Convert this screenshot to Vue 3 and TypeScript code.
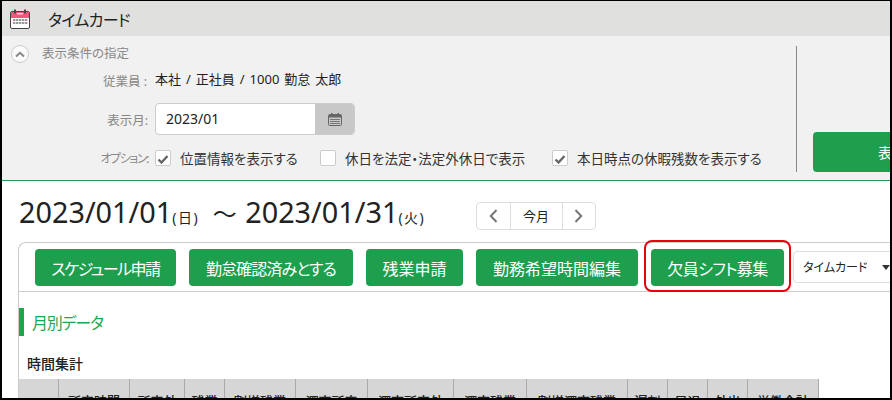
<script setup lang="ts">
const options = [
  { label: '位置情報を表示する', checked: true, width: 165 },
  { label: '休日を法定・法定外休日で表示', checked: false, width: 232 },
  { label: '本日時点の休暇残数を表示する', checked: true, width: 210 },
]

// tight: カナの多いボタンは字詰めを変えて見本の幅に合わせる
const actions = [
  { label: 'スケジュール申請', width: 141, tight: -1.5 },
  { label: '勤怠確認済みとする', width: 164, tight: -0.9 },
  { label: '残業申請', width: 97, tight: 0 },
  { label: '勤務希望時間編集', width: 162, tight: 0 },
]

// ヘッダーの列幅は見本の罫線位置から取った値
const columns = [
  { label: '', width: 40 },
  { label: '所定時間', width: 71 },
  { label: '所定外', width: 55 },
  { label: '残業', width: 40 },
  { label: '割増残業', width: 71 },
  { label: '深夜所定', width: 72 },
  { label: '深夜所定外', width: 86 },
  { label: '深夜残業', width: 73 },
  { label: '割増深夜残業', width: 101 },
  { label: '遅刻', width: 40 },
  { label: '早退', width: 40 },
  { label: '外出', width: 40 },
  { label: '労働合計', width: 71 },
]
</script>

<template>
  <div class="frame">
    <header class="title-bar">
      <svg class="cal-logo" width="20" height="20" viewBox="0 0 20 20">
        <rect x="0.5" y="2.5" width="19" height="17" rx="1.5" fill="#fff" stroke="#444" />
        <path d="M1 4a1 1 0 0 1 1-1h16a1 1 0 0 1 1 1v5H1z" fill="#f4557a" />
        <rect x="4" y="0.5" width="2" height="4" fill="#444" />
        <rect x="14" y="0.5" width="2" height="4" fill="#444" />
        <rect x="7" y="4" width="6" height="1.5" fill="#ffd5de" />
        <g fill="#f4557a">
          <rect x="6" y="7" width="2.4" height="2" />
          <rect x="9" y="7" width="2.4" height="2" />
          <rect x="12" y="7" width="2.4" height="2" />
          <rect x="15" y="7" width="2.4" height="2" />
        </g>
        <g fill="#9a9a9a">
          <rect x="3" y="10" width="2.4" height="2" />
          <rect x="6" y="10" width="2.4" height="2" />
          <rect x="9" y="10" width="2.4" height="2" />
          <rect x="12" y="10" width="2.4" height="2" />
          <rect x="15" y="10" width="2.4" height="2" />
          <rect x="3" y="13" width="2.4" height="2" />
          <rect x="6" y="13" width="2.4" height="2" />
          <rect x="9" y="13" width="2.4" height="2" />
          <rect x="12" y="13" width="2.4" height="2" />
          <rect x="15" y="13" width="2.4" height="2" />
        </g>
      </svg>
      <h1>タイムカード</h1>
    </header>

    <section class="cond-panel">
      <div class="cond-main">
        <div class="cond-head">
          <span class="toggle">
            <svg width="10" height="7" viewBox="0 0 10 7">
              <path d="M1 5.5L5 1.8L9 5.5" fill="none" stroke="#888" stroke-width="2" />
            </svg>
          </span>
          <span class="cond-head-text">表示条件の指定</span>
        </div>
        <div class="cond-row employee">
          <span class="cond-label">従業員 :</span>
          <span class="employee-value">本社 / 正社員 / 1000 勤怠 太郎</span>
        </div>
        <div class="cond-row month">
          <span class="cond-label">表示月:</span>
          <div class="month-input">
            <span class="month-value">2023/01</span>
            <span class="month-addon">
              <svg width="14" height="13" viewBox="0 0 14 13">
                <rect x="0.5" y="1.5" width="13" height="11" rx="1" fill="none" stroke="#666" />
                <rect x="1" y="2" width="12" height="2.5" fill="#666" />
                <rect x="3" y="0" width="1.5" height="2.5" fill="#666" />
                <rect x="9.5" y="0" width="1.5" height="2.5" fill="#666" />
                <path d="M2 6.5h10M2 8.5h10M2 10.5h10" stroke="#777" stroke-width="1" />
              </svg>
            </span>
          </div>
        </div>
        <div class="cond-row opts">
          <span class="cond-label narrow">オプション:</span>
          <label v-for="opt in options" :key="opt.label" class="opt" :style="{ width: opt.width + 'px' }">
            <span class="box">
              <svg v-if="opt.checked" width="12" height="11" viewBox="0 0 12 11">
                <path d="M1.5 6.5L4.5 9.5L10.5 3" fill="none" stroke="#666" stroke-width="2.4" />
              </svg>
            </span>
            <span>{{ opt.label }}</span>
          </label>
        </div>
      </div>
      <div class="cond-side">
        <button class="show-btn">表示</button>
      </div>
    </section>

    <main class="body">
      <div class="period-row">
        <div class="period">
          2023/01/01<small>(日)</small><span class="tilde">～</span>2023/01/31<small>(火)</small>
        </div>
        <div class="pager">
          <span class="pager-arrow">
            <svg width="9" height="14" viewBox="0 0 9 14"><path d="M7.5 1L1.8 7L7.5 13" fill="none" stroke="#777" stroke-width="2" /></svg>
          </span>
          <span class="pager-now">今月</span>
          <span class="pager-arrow">
            <svg width="9" height="14" viewBox="0 0 9 14"><path d="M1.5 1L7.2 7L1.5 13" fill="none" stroke="#777" stroke-width="2" /></svg>
          </span>
        </div>
      </div>

      <div class="card">
        <div class="toolbar">
          <button
            v-for="a in actions"
            :key="a.label"
            class="act-btn"
            :style="{ width: a.width + 'px', letterSpacing: a.tight + 'px' }"
          >{{ a.label }}</button>
          <div class="highlight-wrap">
            <button class="act-btn recruit">欠員シフト募集</button>
            <span class="highlight"></span>
          </div>
          <div class="view-select">
            <span class="view-name">タイムカード</span>
            <i class="caret"></i>
          </div>
        </div>

        <h2 class="section-title">月別データ</h2>
        <h3 class="sub-title">時間集計</h3>

        <div class="sum-head">
          <div v-for="(c, i) in columns" :key="i" class="sum-cell" :style="{ width: c.width + 'px' }">{{ c.label }}</div>
        </div>
      </div>
    </main>
  </div>
</template>

<style>
html,
body {
  margin: 0;
  overflow: hidden;
  background: #fff;
}
</style>

<style scoped>
.frame {
  box-sizing: border-box;
  width: 892px;
  height: 400px;
  overflow: hidden;
  border: 2px solid #000;
  border-top-width: 1px;
  font-family: "Noto Sans", "Noto Sans CJK JP", sans-serif;
  font-feature-settings: "palt";
  color: #222;
  background: #fff;
}

.title-bar {
  height: 35px;
  display: flex;
  align-items: center;
  padding-left: 8px;
  background: #e0e0de;
}

.cal-logo {
  flex: none;
}

.title-bar h1 {
  margin: 0 0 0 18px;
  font-size: 16px;
  letter-spacing: -0.7px;
  font-weight: 400;
  color: #222;
}

.cond-panel {
  height: 144px;
  display: flex;
  background: #f1f1f1;
  border-bottom: 1px solid #1e9f4d;
}

.cond-main {
  width: 795px;
  flex: none;
  border-right: 1px solid #888;
  margin-top: 10px;
  margin-bottom: 8px;
  box-sizing: border-box;
}

.cond-head {
  display: flex;
  align-items: center;
  gap: 13px;
  margin-top: -1px;
  padding-left: 9px;
  font-size: 12.5px;
  color: #888;
  height: 18px;
}

.cond-head-text {
  line-height: 14px;
  margin-top: -1px;
}

.toggle {
  box-sizing: border-box;
  width: 18px;
  height: 18px;
  border-radius: 50%;
  border: 1px solid #ccc;
  background: #fafafa;
  display: flex;
  align-items: center;
  justify-content: center;
}

.cond-row {
  display: flex;
  align-items: center;
  font-size: 12px;
}

.cond-label {
  width: 146px;
  flex: none;
  padding-right: 1px;
  box-sizing: border-box;
  text-align: right;
  color: #888;
  font-size: 12.5px;
}

.cond-label.narrow {
  font-size: 12px;
  letter-spacing: -1.4px;
}

.employee {
  margin-top: 8px;
  height: 18px;
}

.employee-value {
  margin-left: 7px;
  font-size: 13px;
  word-spacing: 1.6px;
  line-height: 16px;
  margin-top: -2px;
}

.month {
  margin-top: 14px;
}

.month-input {
  width: 200px;
  height: 32px;
  box-sizing: border-box;
  display: flex;
  border: 1px solid #ccc;
  border-radius: 4px;
  overflow: hidden;
  background: #fff;
  margin-left: 7px;
}

.month-value {
  flex: 1;
  padding-left: 10px;
  line-height: 30px;
  font-size: 14px;
  color: #222;
}

.month-addon {
  width: 39px;
  background: #c8c8c8;
  display: flex;
  align-items: center;
  justify-content: center;
}

.cond-row.month .cond-label {
  width: 146px;
  padding-right: 0;
}

.opts {
  margin-top: 13px;
}

.opts .cond-label {
  padding-right: 0;
}

.opt {
  display: flex;
  align-items: center;
  gap: 9px;
  font-size: 13.5px;
  color: #333;
  white-space: nowrap;
}

.opts .opt:first-of-type {
  margin-left: 7px;
}

.box {
  box-sizing: border-box;
  width: 16px;
  height: 16px;
  flex: none;
  border: 1px solid #ccc;
  border-radius: 2px;
  background: #fff;
  display: flex;
  align-items: center;
  justify-content: center;
}

.cond-side {
  flex: 1;
  min-width: 0;
  overflow: hidden;
  display: flex;
  align-items: flex-end;
  padding: 0 0 8px 16px;
}

.show-btn {
  flex: none;
  width: 158px;
  height: 40px;
  border: none;
  border-radius: 4px;
  background: #1e9f4d;
  color: #fff;
  font-family: inherit;
  font-feature-settings: inherit;
  font-size: 14px;
}

.period-row {
  height: 61px;
  display: flex;
  padding-left: 17px;
}

.period {
  width: 457px;
  flex: none;
  font-size: 28.8px;
  line-height: 40px;
  margin-top: 11px;
  color: #222;
  white-space: nowrap;
}

.period small {
  display: inline-block;
  width: 32px;
  box-sizing: border-box;
  font-size: 14px;
  letter-spacing: 1.5px;
}

.tilde {
  display: inline-block;
  width: 41px;
  text-align: center;
  font-size: 24px;
  font-feature-settings: normal;
}

.pager {
  display: flex;
  width: 120px;
  height: 28px;
  box-sizing: border-box;
  margin-top: 21px;
  border: 1px solid #ddd;
  border-radius: 4px;
}

.pager-arrow {
  flex: 1;
  display: flex;
  align-items: center;
  justify-content: center;
}

.pager-now {
  box-sizing: border-box;
  width: 53px;
  flex: none;
  text-align: center;
  font-size: 13px;
  line-height: 26px;
  border-left: 1px solid #ddd;
  border-right: 1px solid #ddd;
}

.card {
  margin-left: 16px;
  width: 900px;
  height: 170px;
  box-sizing: border-box;
  border-top: 1px solid #ccc;
  border-left: 1px solid #ccc;
  border-top-left-radius: 8px;
}

.toolbar {
  height: 49px;
  box-sizing: border-box;
  display: flex;
  align-items: flex-start;
  gap: 13px;
  padding: 6px 0 0 16px;
  border-bottom: 1px solid #ccc;
}

.act-btn {
  height: 37px;
  flex: none;
  padding: 0;
  border: none;
  border-radius: 4px;
  background: #1e9f4d;
  color: #fff;
  font-family: inherit;
  font-feature-settings: inherit;
  font-size: 16px;
  white-space: nowrap;
}

.highlight-wrap {
  position: relative;
  flex: none;
  height: 37px;
}

.recruit {
  width: 133px;
  letter-spacing: -0.6px;
}

.highlight {
  position: absolute;
  inset: -9px -7px -6px;
  border: 2px solid #e8000d;
  border-radius: 8px;
  pointer-events: none;
}

.view-select {
  flex: none;
  width: 120px;
  height: 32px;
  margin: 2px 0 0 -4px;
  box-sizing: border-box;
  display: flex;
  align-items: center;
  padding-left: 9px;
  border: 1px solid #ddd;
  border-radius: 4px;
  background: #fff;
  font-size: 12px;
  color: #222;
}

.view-name {
  width: 63px;
  flex: none;
  white-space: nowrap;
}

.caret {
  flex: none;
  width: 0;
  height: 0;
  margin-left: 16px;
  border-left: 4px solid transparent;
  border-right: 4px solid transparent;
  border-top: 5px solid #333;
}

.section-title {
  margin: 16px 0 0;
  height: 28px;
  box-sizing: border-box;
  padding-left: 8px;
  border-left: 5px solid #1ea64f;
  font-size: 16px;
  letter-spacing: -1.2px;
  font-weight: 400;
  line-height: 30px;
  color: #1ea64f;
}

.sub-title {
  margin: 18px 0 0 8px;
  height: 20px;
  font-size: 14px;
  font-weight: 500;
  line-height: 20px;
  color: #222;
}

.sum-head {
  margin-top: 5px;
  height: 40px;
  display: flex;
}

.sum-cell {
  flex: none;
  box-sizing: border-box;
  padding-top: 12px;
  background: #d5d6d5;
  border-right: 1px solid #aaa;
  text-align: center;
  font-size: 13px;
  font-weight: 500;
  color: #222;
}
</style>
